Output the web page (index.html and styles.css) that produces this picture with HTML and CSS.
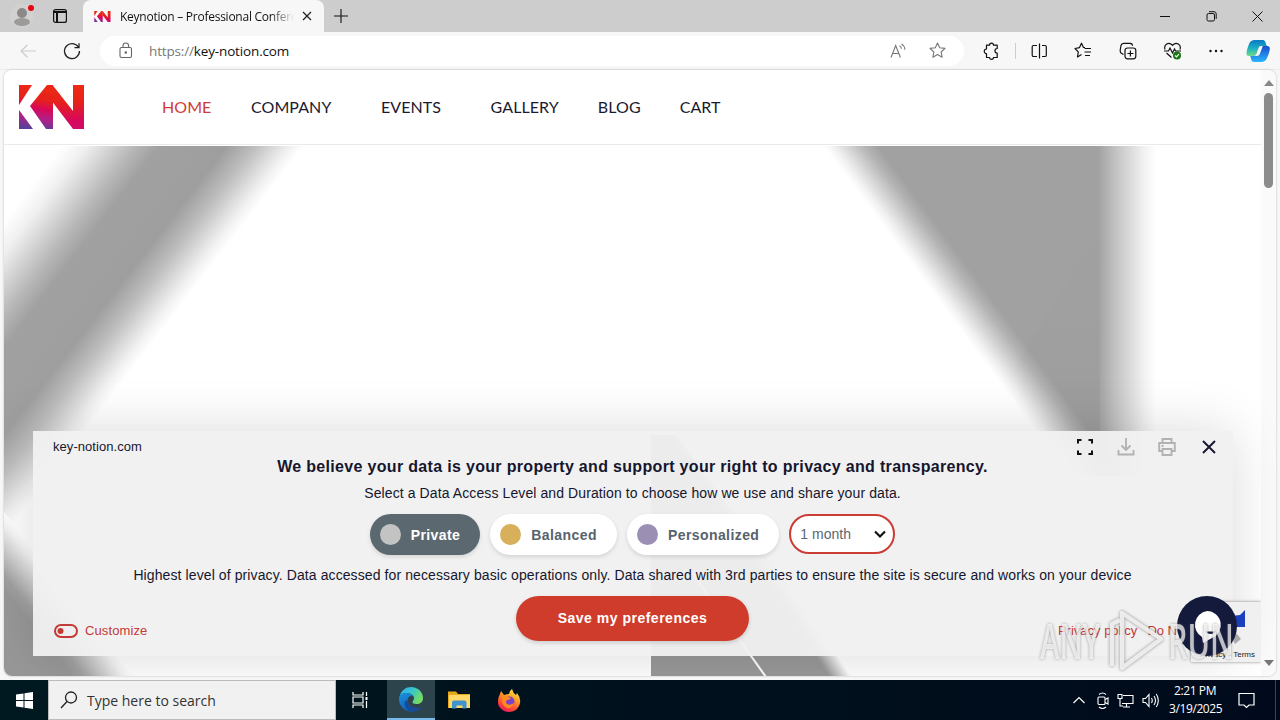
FILE: index.html
```html
<!DOCTYPE html>
<html lang="en">
<head>
    <meta charset="UTF-8">
    <title>Keynotion – Professional Conferences</title>
    <meta name="viewport" content="width=device-width, initial-scale=1.0">
    <link rel="stylesheet" href="styles.css">
</head>
<body>
    <div class="tabbar">
        <svg class="profile" width="30" height="32" viewBox="0 0 30 32">
            <circle cx="14" cy="16" r="12" fill="#d3d1cf"/>
            <circle cx="14" cy="13" r="5" fill="#8c8a88"/>
            <ellipse cx="14" cy="22" rx="8" ry="4" fill="#9d9b99"/>
            <circle cx="23" cy="8" r="3" fill="#e30613"/>
        </svg>
        <svg class="tab-actions" width="16" height="16" viewBox="0 0 16 16" fill="none" stroke="#111" stroke-width="1.2">
            <rect x="1.6" y="1.6" width="12.8" height="12.8" rx="2"/>
            <path d="M2 4h12M5 4v10" stroke-width="2"/>
        </svg>
        <div class="tab">
            <svg width="17" height="11" viewBox="0 0 66 44">
                <use href="#kn"/>
            </svg>
            <span class="tab-title">Keynotion – Professional Confere</span>
            <svg width="10" height="10" viewBox="0 0 10 10" stroke="#222" stroke-width="1.3"><path d="M1 1l8 8M9 1L1 9"/></svg>
        </div>
        <svg class="new-tab" width="14" height="14" viewBox="0 0 14 14" stroke="#111" stroke-width="1.1"><path d="M7 0v14M0 7h14"/></svg>
        <div class="window-buttons">
            <svg width="11" height="11" viewBox="0 0 11 11" stroke="#111"><path d="M0 5.5h10"/></svg>
            <svg width="11" height="11" viewBox="0 0 11 11" stroke="#111" fill="none"><rect x="1" y="2.5" width="7.5" height="7.5" rx="1.5"/><path d="M3 .7h5q2.2 0 2.2 2.2v5"/></svg>
            <svg width="11" height="11" viewBox="0 0 11 11" stroke="#111"><path d="M.5.5l10 10M10.500.5l-10 10"/></svg>
        </div>
    </div>

    <div class="toolbar">
        <svg class="back" width="17" height="14" viewBox="0 0 17 14" fill="none" stroke="#ccc" stroke-width="1.2"><path d="M16 7H1M7.500.8L1 7l6.500 6.200"/></svg>
        <svg class="reload" width="18" height="18" viewBox="0 0 18 18" fill="none" stroke="#222" stroke-width="1.3"><path d="M15.500 5.300A7.500 7.500 0 1 0 16.500 9M16 1.200v4.500h-4.500"/></svg>
        <div class="address">
            <svg class="lock" width="14" height="17" viewBox="0 0 14 17" fill="none" stroke="#666" stroke-width="1.1"><rect x="1" y="5.500" width="11.500" height="10" rx="1.500"/><path d="M4 5.500V3.800a2.800 2.800 0 0 1 5.600 0v1.700"/><circle cx="6.800" cy="10.500" r=".7" fill="#666"/></svg>
            <span class="url"><i>https://</i>key-notion.com</span>
            <svg class="read" width="16" height="16" viewBox="0 0 16 16" fill="none" stroke="#777" stroke-width="1.1"><path d="M1 14.500L5.700 2.500l4.700 12M2.600 10.500h6.300M9.500 2.700q1.800 1 2 3M11.500 1q3 1.600 3.400 5.600"/></svg>
            <svg class="star" width="17" height="17" viewBox="0 0 17 17" fill="none" stroke="#777" stroke-width="1.1" stroke-linejoin="round"><path d="M8.500 1l2.200 4.800 5.300.6-3.900 3.600 1 5.200-4.600-2.600-4.600 2.600 1-5.200L1 6.400l5.300-.6z"/></svg>
        </div>
        <div class="tools">
            <svg width="17" height="18" viewBox="0 0 17 18" fill="none" stroke="#111" stroke-width="1.2" stroke-linejoin="round"><path d="M3.500 3.200h3C6.500.5 10.500.5 10.500 3.200h3.700V6.500c-3 0-3 4.500 0 4.500v4.500h-3.700c0 2.500-4 2.500-4 0h-3V11.500C.5 11.500.5 7 3.500 7z"/></svg>
            <b class="divider"></b>
            <svg width="17" height="16" viewBox="0 0 17 16" fill="none" stroke="#111" stroke-width="1.2"><path d="M6 2.500H2.500q-1.300 0-1.300 1.300v8.400q0 1.300 1.300 1.300H6M11 2.500h3q1.300 0 1.300 1.300v8.400q0 1.300-1.300 1.300h-3M8.500.5v15"/></svg>
            <svg width="18" height="17" viewBox="0 0 18 17" fill="none" stroke="#111" stroke-width="1.200" stroke-linejoin="round"><path d="M11 5.500H9.500L7.500 1.200 5.400 5.700 1 6.500l3.300 3.300-.8 5.200 4-2.400M10.500 6.500h6.500M10.500 10h6.500M11 13.500h5"/></svg>
            <svg width="18" height="18" viewBox="0 0 18 18" fill="none" stroke="#111" stroke-width="1.2"><rect x="6" y="6" width="10.800" height="10.800" rx="2.500"/><path d="M11.400 8.500v6M8.400 11.500h6M4.500 12.500L2 11Q1 10 1.200 8L2 3.500Q2.500 1.300 4.500 1.300H11q2.500 0 2.500 2.500"/></svg>
            <svg width="19" height="18" viewBox="0 0 19 18" fill="none" stroke="#111" stroke-width="1.2"><path d="M2 7.500C.5 3 5.500-1 9.500 3.300 13.500-1 18.500 3 17 7.500M1 9h4.500l1.500-3 2.500 5 2-4 1.200 2H18M3.500 11l5 4.500"/><circle cx="14" cy="13.500" r="4" fill="#187818" stroke="none"/><path d="M12.200 13.500l1.300 1.300 2.400-2.600" stroke="#fff"/></svg>
            <svg width="16" height="16" viewBox="0 0 16 16" fill="#111"><circle cx="2.500" cy="8" r="1.200"/><circle cx="8" cy="8" r="1.200"/><circle cx="13.500" cy="8" r="1.200"/></svg>
        </div>
        <svg class="copilot" width="24" height="24" viewBox="0 0 24 24">
            <defs>
                <linearGradient id="cp1" x1="0" y1="0" x2="0" y2="1"><stop offset="0" stop-color="#0878c8"/><stop offset=".55" stop-color="#20b3c0"/><stop offset="1" stop-color="#70dc80"/></linearGradient>
                <linearGradient id="cp2" x1="0" y1="0" x2="0" y2="1"><stop offset="0" stop-color="#1c4cc8"/><stop offset="1" stop-color="#28b6ff"/></linearGradient>
            </defs>
            <path d="M9 1h8q2 0 3 4l.8 2H15q-2 0-2.500 2l-2 6q-.8 2-3 2H3Q0 17 .5 13.500 1 10 3 5q1.500-4 6-4z" fill="url(#cp1)"/>
            <path d="M15 23H8q-2.500 0-3.200-4l-.5-2H8q2 0 2.700-2l2-6q.8-2 3-2h5.500Q24.500 7 23.700 11 23 15 21 19q-1.500 4-6 4z" fill="url(#cp2)"/>
            <path d="M12.700 9q.5-2 2.600-2h1.500l-3 8q-.8 2-3 2H9l1.500-2z" fill="#f7f7f7"/>
        </svg>
    </div>

    <div class="viewport">
        <div class="page">
            <div class="site-header">
                <svg class="logo" width="66" height="44" viewBox="0 0 66 44">
                    <defs>
                        <linearGradient id="kg" gradientUnits="userSpaceOnUse" x1="34" y1="0" x2="26" y2="46">
                            <stop offset="0" stop-color="#ee2a12"/>
                            <stop offset=".36" stop-color="#e5211c"/>
                            <stop offset=".55" stop-color="#d80858"/>
                            <stop offset=".76" stop-color="#b02088"/>
                            <stop offset="1" stop-color="#5a3f98"/>
                        </linearGradient>
                        <linearGradient id="kr" gradientUnits="userSpaceOnUse" x1="40" y1="0" x2="40" y2="44">
                            <stop offset="0" stop-color="#ee2a12"/>
                            <stop offset=".4" stop-color="#e5211c"/>
                            <stop offset=".8" stop-color="#d8085c"/>
                            <stop offset="1" stop-color="#cf0b68"/>
                        </linearGradient>
                        <g id="kn" fill="url(#kg)">
                            <path d="M0 0h13L0 20z"/>
                            <path d="M0 25l14 19H0z"/>
                            <path d="M28 0h6v44h-7L11 21z"/>
                            <path d="M33.500 0l20.500 26V0h11v44H54L33.500 17z" fill="url(#kr)"/>
                        </g>
                    </defs>
                    <use href="#kn"/>
                </svg>
                <div class="nav">
                    <a class="active">HOME</a>
                    <a class="has-menu">COMPANY</a>
                    <a class="has-menu">EVENTS</a>
                    <a>GALLERY</a>
                    <a>BLOG</a>
                    <a>CART</a>
                </div>
            </div>

            <svg class="hero" width="1257" height="530" viewBox="4 146 1257 530">
                <defs>
                    <linearGradient id="bandLeft" gradientUnits="userSpaceOnUse" x1="62" y1="146" x2="214" y2="263">
                        <stop offset="0" stop-color="#fff"/>
                        <stop offset=".1" stop-color="#f0f0f0"/>
                        <stop offset=".3" stop-color="#b8b8b8"/>
                        <stop offset=".4" stop-color="#a1a1a1"/>
                        <stop offset=".68" stop-color="#9e9e9e"/>
                        <stop offset=".8" stop-color="#bebebe"/>
                        <stop offset=".94" stop-color="#f0f0f0"/>
                        <stop offset="1" stop-color="#fff"/>
                    </linearGradient>
                    <linearGradient id="bandLow" gradientUnits="userSpaceOnUse" x1="22" y1="613" x2="60" y2="583">
                        <stop offset="0" stop-color="#989898"/>
                        <stop offset=".2" stop-color="#a2a2a2"/>
                        <stop offset=".85" stop-color="#f5f5f5"/>
                        <stop offset="1" stop-color="#fff"/>
                    </linearGradient>
                    <linearGradient id="column" gradientUnits="userSpaceOnUse" x1="1098" y1="0" x2="1156" y2="0">
                        <stop offset="0" stop-color="#a1a1a1"/>
                        <stop offset=".3" stop-color="#c2c2c2"/>
                        <stop offset=".8" stop-color="#f2f2f2"/>
                        <stop offset="1" stop-color="#fff"/>
                    </linearGradient>
                    <linearGradient id="diagonal" gradientUnits="userSpaceOnUse" x1="824" y1="146" x2="859" y2="120">
                        <stop offset="0" stop-color="#fff"/>
                        <stop offset=".18" stop-color="#fff" stop-opacity=".85"/>
                        <stop offset=".75" stop-color="#fff" stop-opacity=".2"/>
                        <stop offset="1" stop-color="#fff" stop-opacity="0"/>
                    </linearGradient>
                    <linearGradient id="lowRight" gradientUnits="userSpaceOnUse" x1="816" y1="656" x2="831" y2="646">
                        <stop offset="0" stop-color="#999"/>
                        <stop offset="1" stop-color="#fff"/>
                    </linearGradient>
                    <linearGradient id="shade" x1="0" y1="0" x2="0" y2="1">
                        <stop offset="0" stop-color="#888" stop-opacity="0"/>
                        <stop offset="1" stop-color="#888" stop-opacity=".2"/>
                    </linearGradient>
                </defs>
                <rect x="4" y="146" width="1257" height="530" fill="#fff"/>
                <path d="M4 146h320L4 560z" fill="url(#bandLeft)"/>
                <path d="M4 512l130 164H4z" fill="url(#bandLow)"/>
                <rect x="820" y="146" width="341" height="330" fill="url(#column)"/>
                <path d="M1100 230v246h-100V390z" fill="url(#shade)"/>
                <path d="M810 146h300v330H810z" fill="url(#diagonal)"/>
                <path d="M651 435h25l180 241H651z" fill="url(#lowRight)"/>
                <path d="M690 570l76 107" stroke="#fff" stroke-width="2"/>
            </svg>
        </div>
        <div class="scrollbar">
            <i class="arrow-up"></i>
            <i class="thumb"></i>
            <i class="arrow-down"></i>
        </div>

        <div class="consent">
            <div class="consent-top">
                <span class="site-name">key-notion.com</span>
                <svg width="18" height="18" viewBox="0 0 18 18" fill="none" stroke="#111" stroke-width="2"><path d="M2 5.500V2h3.500M12.500 2H16v3.500M16 12.500V16h-3.500M5.500 16H2v-3.500"/></svg>
                <svg width="18" height="18" viewBox="0 0 18 18" fill="none" stroke="#b2b2b2" stroke-width="1.900"><path d="M9 0v12M4.500 7.500L9 12l4.500-4.500M1.500 12v4.500h15V12"/></svg>
                <svg width="18" height="18" viewBox="0 0 18 18" fill="none" stroke="#b2b2b2" stroke-width="1.900"><path d="M4.500 5V1h9v4M4.500 13H1.200V5h15.600v8h-3.300M4.500 11h9v6h-9zM3.500 8h2"/></svg>
                <svg width="16" height="16" viewBox="0 0 16 16" stroke="#1a1a35" stroke-width="2"><path d="M2 2l12 12M14 2L2 14"/></svg>
            </div>
            <div class="consent-title">We believe your data is your property and support your right to privacy and transparency.</div>
            <div class="consent-sub">Select a Data Access Level and Duration to choose how we use and share your data.</div>
            <div class="levels">
                <div class="level selected"><i class="dot"></i>Private</div>
                <div class="level balanced"><i class="dot"></i>Balanced</div>
                <div class="level personalized"><i class="dot"></i>Personalized</div>
                <div class="duration">1 month
                    <svg width="14" height="9" viewBox="0 0 14 9" fill="none" stroke="#111" stroke-width="2.200"><path d="M2 1.500l5 5 5-5"/></svg>
                </div>
            </div>
            <div class="consent-text">Highest level of privacy. Data accessed for necessary basic operations only. Data shared with 3rd parties to ensure the site is secure and works on your device</div>
            <div class="consent-bottom">
                <div class="customize">
                    <svg width="25" height="15" viewBox="0 0 25 15"><rect x="2" y="2" width="22" height="12" rx="6" fill="none" stroke="#c43a35" stroke-width="2"/><circle cx="7.500" cy="8" r="3" fill="#c43a35"/></svg>
                    <span>Customize</span>
                </div>
                <div class="save">Save my preferences</div>
                <div class="links"><span>Privacy policy</span><span>Do N</span></div>
            </div>
        </div>

        <div class="recaptcha">
            <svg width="60" height="44" viewBox="0 0 60 44">
                <path d="M32 9l8 5 9-1 5-5v17H40L30 18z" fill="#1c3fbb"/>
                <path d="M38 31l8 1 4 5-6 5z" fill="#aaa"/>
            </svg>
            <div class="recaptcha-text">Privacy - Terms</div>
        </div>
        <div class="chat">
            <svg width="60" height="60" viewBox="0 0 60 60">
                <circle cx="30" cy="30" r="30" fill="#141a3c"/>
                <path d="M30 15a14 14 0 0 1 5 27l-9 5-1-6a14 14 0 0 1 5-26z" fill="#fff"/>
                <path d="M28 35.500h11q-5 5-11 0z" fill="#141a3c"/>
            </svg>
        </div>
    </div>

    <div class="taskbar">
        <div class="start">
            <svg width="17" height="17" viewBox="0 0 17 17" fill="#fff"><path d="M0 2.400l7.500-1V8H0zM8.500 1.200L17 0v8H8.500zM0 9h7.500v6.600L0 14.600zM8.500 9H17v8l-8.500-1.200z"/></svg>
        </div>
        <div class="search">
            <svg width="18" height="18" viewBox="0 0 18 18" fill="none" stroke="#222" stroke-width="1.300"><circle cx="11" cy="6.500" r="5.500"/><path d="M7 10.500L1 17"/></svg>
            Type here to search
        </div>
        <div class="app">
            <svg width="18" height="18" viewBox="0 0 18 18" fill="none" stroke="#fff" stroke-width="1.200"><path d="M2 1v3h10V1M2 17v-3h10v3M2 6h10v6H2zM15.500 1v4M15.500 10v7"/><path d="M14.500 6h2v3h-2z" fill="#fff" stroke="none"/></svg>
        </div>
        <div class="app active">
            <svg width="26" height="26" viewBox="0 0 26 26">
                <defs>
                    <linearGradient id="eg" x1="0" y1="0" x2="1" y2=".5"><stop offset="0" stop-color="#35a8ee"/><stop offset=".5" stop-color="#35c5cf"/><stop offset="1" stop-color="#74dc62"/></linearGradient>
                    <linearGradient id="eb" x1="0" y1="0" x2=".6" y2="1"><stop offset="0" stop-color="#1b93e0"/><stop offset="1" stop-color="#1059b0"/></linearGradient>
                </defs>
                <path d="M1.500 11C3 4 8 1 13 1c7 0 12 5 12 11 0 4-3 6-6.500 6-3 0-4-1-4-2s1.500-1.500 1.500-4c0-3-4-5-8-5-3 0-5.500 2-6.500 4z" fill="url(#eg)"/>
                <path d="M1 13c0-4 3-6 7-6 3 0 6 1 7.500 3-4-1-6 2-6 4.500 0 4 4 7.500 9 7.500 2 0 3.500-.5 4.500-1-2 3-5.500 4.500-9.500 4.500C6.500 25.500 1 20 1 13z" fill="url(#eb)"/>
                <path d="M9.500 14.500c0 4 4 7.500 9 7.500 2 0 3.500-.5 4.500-1-2 3-5.500 4.500-9.500 4.500-5-1-8-6-6.500-10.500z" fill="#154b9a"/>
            </svg>
        </div>
        <div class="app">
            <svg width="23" height="20" viewBox="0 0 23 20"><path d="M0 1.500h8l2 2.500h12v14H0z" fill="#e6a91e"/><path d="M1 5h21v13H1z" fill="#ffd867"/><path d="M4 18.500v-6q0-2 2-2h10.500q2 0 2 2v6h-4v-3h-6v3z" fill="#3f94d0"/></svg>
        </div>
        <div class="app">
            <svg width="24" height="25" viewBox="0 0 24 25">
                <defs><linearGradient id="ff" x1=".8" y1="0" x2=".3" y2="1"><stop offset="0" stop-color="#fff04a"/><stop offset=".4" stop-color="#ff9a24"/><stop offset=".75" stop-color="#ff4639"/><stop offset="1" stop-color="#e6185a"/></linearGradient></defs>
                <path d="M3 6l1-3 3 4q3-1 5-1 0-3 3-5 1 4 4 6l1-2q4 5 3 10c-1 5-5 9-11 9S1 19.500 1 14q0-5 2-8z" fill="url(#ff)"/>
                <circle cx="12.500" cy="13.500" r="5" fill="#7c42c8"/>
                <path d="M5 8q4-1 6 1l3 1q-1 2-4 2-2 2 0 4 3 2 7-1-2 6-7 5-6-2-5-12z" fill="#ff8a20"/>
            </svg>
        </div>
        <div class="tray">
            <svg width="12" height="8" viewBox="0 0 12 8" fill="none" stroke="#fff" stroke-width="1.200"><path d="M.5 7L6 1.500 11.500 7"/></svg>
            <svg width="12" height="17" viewBox="0 0 12 17" fill="none" stroke="#fff" stroke-width="1.100"><rect x="1" y="5" width="7" height="7.500" rx="1"/><path d="M8 7.500l3-1.500v6L8 10.500M2 2.500Q5.500-.5 9 2.500M2 15q3.500 3 7 0"/></svg>
            <svg width="17" height="15" viewBox="0 0 17 15" fill="none" stroke="#fff" stroke-width="1.100"><path d="M6 2.500h10v8H5M9.500 11v3M6 14h7M1 1.500h4v4H1zM3 5.500V13h3"/></svg>
            <svg width="17" height="15" viewBox="0 0 17 15" fill="none" stroke="#fff" stroke-width="1.100"><path d="M1 5.500h2.500l3.500-4v12l-3.500-4H1zM9.500 5q1.500 2.500 0 5M12 3q3 4.500 0 9M14.300 1q4 6.500 0 13"/></svg>
        </div>
        <div class="clock">2:21 PM<br>3/19/2025</div>
        <svg class="notify" width="17" height="17" viewBox="0 0 17 17" fill="none" stroke="#fff" stroke-width="1.200"><path d="M1 1.500h15v11.500h-5l-2.500 2.500L6 13H1z"/></svg>
        <b class="show-desktop"></b>
    </div>

    <svg class="watermark" width="210" height="70" viewBox="1034 604 210 70">
        <g class="mark-text">
            <text x="1040" y="659" textLength="60" lengthAdjust="spacingAndGlyphs">ANY</text>
            <text x="1168" y="659" textLength="66" lengthAdjust="spacingAndGlyphs">RUN</text>
        </g>
        <g class="mark-play">
            <path d="M1122 613l39 26-39 29z"/>
            <path d="M1112 666v-42l8-4"/>
        </g>
    </svg>
</body>
</html>
```
FILE: styles.css
```css
* {
    box-sizing: border-box;
}

body {
    margin: 0;
    width: 1280px;
    height: 720px;
    overflow: hidden;
    display: flex;
    flex-direction: column;
    background-color: #f7f7f7;
    font-family: "Liberation Sans", Arial, sans-serif;
    position: relative;
}

svg {
    display: block;
    flex: none;
}

/* browser */
.tabbar {
    height: 32px;
    flex: none;
    display: flex;
    align-items: center;
    background-color: #cdcdcd;
    padding-left: 8px;
}

.tab-actions {
    margin-left: 14px;
}

.tab {
    width: 241px;
    height: 32px;
    margin-left: 15px;
    padding: 0 11px;
    display: flex;
    align-items: center;
    background-color: #f7f7f7;
    border-radius: 8px 8px 0 0;
}

.tab-title {
    width: 174px;
    margin: 0 8px 0 9px;
    overflow: hidden;
    white-space: nowrap;
    font: 12px "Open Sans", sans-serif;
    letter-spacing: -0.25px;
    color: #111;
    -webkit-mask-image: linear-gradient(to right, #000 150px, transparent);
}

.new-tab {
    margin-left: 10px;
}

.window-buttons {
    margin-left: auto;
    padding-right: 17px;
    display: flex;
    gap: 35px;
}

.toolbar {
    height: 38px;
    flex: none;
    display: flex;
    align-items: center;
    padding-left: 20px;
    border-bottom: 1px solid #ededed;
}

.reload {
    margin-left: 26px;
}

.address {
    width: 864px;
    height: 30px;
    margin-left: 19px;
    padding: 0 18px 0 19px;
    display: flex;
    align-items: center;
    background-color: #fff;
    border-radius: 15px;
}

.url {
    flex: 1;
    margin-left: 16px;
    font: 13.5px "Open Sans", sans-serif;
    letter-spacing: -0.15px;
    color: #111;
}

.url i {
    font-style: normal;
    color: #777;
}

.star {
    margin-left: 23px;
}

.tools {
    margin-left: 19px;
    display: flex;
    align-items: center;
    gap: 26.4px;
}

.divider {
    width: 1px;
    height: 16px;
    margin: 0 -12px 0 -11px;
    background-color: #ccc;
}

.copilot {
    margin-left: 22px;
}

/* page */
.viewport {
    position: relative;
    width: 1272px;
    height: 606px;
    flex: none;
    margin-left: 4px;
    display: flex;
    overflow: hidden;
    background-color: #fff;
    border-radius: 8px;
    box-shadow: 0 0 2px #aaa;
}

.page {
    width: 1257px;
}

.site-header {
    height: 76px;
    display: flex;
    padding: 15px 0 0 15px;
    background: linear-gradient(#fff 74px, #eaeaea 74px, #eaeaea 75px, #fff 75px);
}

.nav {
    display: flex;
    margin-left: 77px;
    height: 43px;
    align-items: center;
    font: 16px Lato, sans-serif;
    letter-spacing: 0.08px;
    color: #1a1a2e;
}

.nav a {
    margin-right: 39px;
}

.nav .has-menu {
    margin-right: 49.5px;
}

.nav .active {
    margin-right: 39.5px;
    color: #cf3b32;
}

.scrollbar {
    width: 15px;
    display: flex;
    flex-direction: column;
    align-items: center;
    background-color: #fafafa;
    padding: 10px 0 10px;
}

.arrow-up,
.arrow-down {
    border: 5px solid transparent;
    border-top-width: 0;
    border-bottom: 6px solid #888;
}

.arrow-down {
    margin-top: auto;
    border-top: 6px solid #777;
    border-bottom-width: 0;
}

.thumb {
    width: 9px;
    height: 95px;
    margin-top: 7px;
    border-radius: 5px;
    background-color: #8b8b8b;
}

/* consent banner */
.consent {
    position: absolute;
    left: 29px;
    top: 361px;
    width: 1200px;
    height: 225px;
    padding: 6px 21px 0 20px;
    display: flex;
    flex-direction: column;
    align-items: center;
    background-color: rgba(240, 240, 240, 0.95);
    box-shadow: 0 0 50px rgba(0, 0, 0, 0.15);
    color: #16162e;
    white-space: nowrap;
}

.consent-top {
    align-self: flex-start;
    width: 1164px;
    height: 20px;
    display: flex;
    align-items: center;
    gap: 23px;
}

.consent-top svg:last-child {
    margin-left: 2px;
}

.site-name {
    flex: 1;
    font-size: 13px;
    line-height: 18px;
    padding-bottom: 1px;
    letter-spacing: 0.05px;
}

.consent-title {
    font-size: 16px;
    line-height: 19px;
    font-weight: bold;
    letter-spacing: 0.32px;
}

.consent-sub,
.consent-text {
    margin-top: 8px;
    font-size: 14px;
    line-height: 19px;
    letter-spacing: 0.1px;
}

.consent-text {
    margin-top: 11px;
}

.levels {
    margin-top: 11px;
    display: flex;
    gap: 10px;
}

.level {
    height: 41px;
    padding: 0 20px 0 10px;
    display: flex;
    align-items: center;
    gap: 10px;
    border-radius: 21px;
    background-color: #fff;
    box-shadow: 0 2px 4px rgba(0, 0, 0, 0.12);
    font-size: 14px;
    font-weight: bold;
    letter-spacing: 0.42px;
    color: #56636c;
}

.selected {
    background-color: #5c6870;
    color: #fff;
}

.dot {
    width: 21px;
    height: 21px;
    border-radius: 50%;
    background-color: #c3c3c3;
}

.balanced .dot {
    background-color: #d8b05c;
}

.personalized .dot {
    background-color: #9c8fb4;
}

.duration {
    width: 106px;
    height: 40px;
    padding: 0 6px 0 9px;
    display: flex;
    align-items: center;
    justify-content: space-between;
    border: 2px solid #cb3c34;
    border-radius: 20px;
    background-color: #fff;
    font-size: 14px;
    color: #5b6770;
}

.consent-bottom {
    width: 100%;
    margin-top: 11px;
    display: grid;
    grid-template-columns: 1fr 233px 1fr;
}

.customize,
.links {
    padding-top: 24px;
    height: 45px;
    display: flex;
    align-items: center;
    gap: 7px;
    font-size: 13px;
    letter-spacing: 0.1px;
    color: #c43a35;
}

.links {
    justify-content: flex-end;
    gap: 10px;
    padding-right: 35px;
    letter-spacing: 0;
}

.save {
    height: 45px;
    line-height: 44px;
    border-radius: 23px;
    background-color: #d03c2c;
    box-shadow: 0 2px 4px rgba(0, 0, 0, 0.15);
    color: #fff;
    text-align: center;
    font-size: 14px;
    font-weight: bold;
    letter-spacing: 0.5px;
}

.recaptcha {
    position: absolute;
    left: 1187px;
    top: 532px;
    width: 70px;
    height: 60px;
    background-color: #f0f0f0;
    box-shadow: 0 0 3px #888;
    clip-path: inset(-4px 0 -4px -4px);
}

.recaptcha-text {
    padding: 4px 0 0 9px;
    font-size: 8px;
    color: #222;
    white-space: nowrap;
}

.chat {
    position: absolute;
    left: 1173px;
    top: 526px;
}

/* windows taskbar */
.taskbar {
    height: 40px;
    margin-top: 4px;
    flex: none;
    display: flex;
    align-items: center;
    background: linear-gradient(to right, #001820, #00101c 60%, #000a1c);
    color: #fff;
}

.start,
.app {
    width: 48px;
    height: 40px;
    display: flex;
    align-items: center;
    justify-content: center;
}

.app {
    width: 49px;
}

.search {
    width: 288px;
    height: 40px;
    padding-left: 11px;
    display: flex;
    align-items: center;
    gap: 9px;
    border: 1px solid #bbb;
    background-color: #f1f1f1;
    font: 14px "Open Sans", sans-serif;
    color: #333;
}

.search + .app {
    width: 51px;
    padding-right: 3px;
}

.app.active {
    width: 48px;
    background-color: #2d444c;
    border-bottom: 2px solid #76b9ed;
}

.tray {
    margin-left: auto;
    display: flex;
    align-items: center;
    gap: 10px;
    margin-right: 10px;
}

.tray svg:nth-child(2),
.tray svg:nth-child(3) {
    margin-right: -2px;
}

.tray svg:first-child {
    margin-right: 2px;
}

.clock {
    width: 52px;
    font: 12px/18px "Open Sans", sans-serif;
    letter-spacing: -0.4px;
    text-align: center;
    white-space: nowrap;
}

.notify {
    margin: 0 20px 0 17px;
}

.show-desktop {
    width: 5px;
    height: 40px;
    border-left: 1px solid #3c4650;
}

/* watermark */
.watermark {
    position: absolute;
    left: 1034px;
    top: 604px;
    filter: drop-shadow(0 0 1.5px rgba(80, 80, 80, 0.7));
}

.mark-text {
    font: 600 48px "Open Sans", sans-serif;
    fill: #fff;
    fill-opacity: 0.7;
}

.mark-play {
    fill: none;
    stroke: #f4f4f4;
    stroke-opacity: 0.9;
    stroke-width: 4.5;
    stroke-linejoin: round;
}
```
